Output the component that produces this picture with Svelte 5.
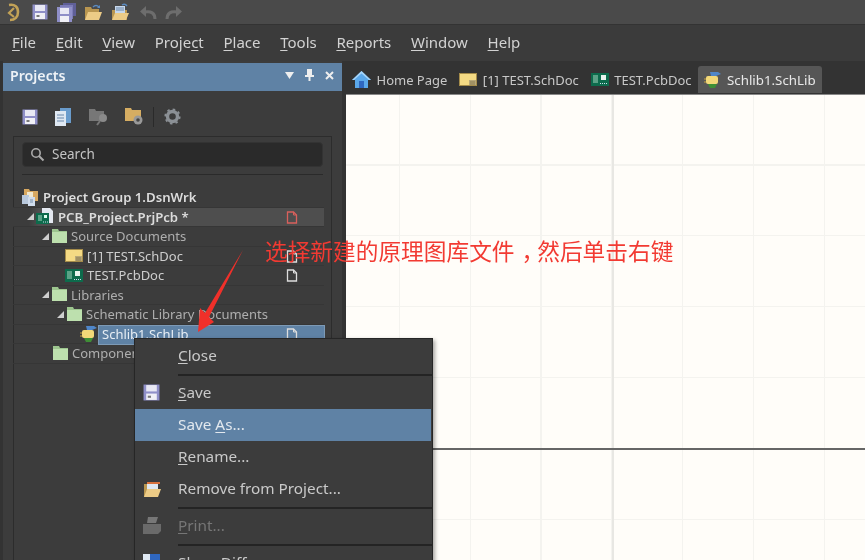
<script>
  const menus = [['F','ile'],['E','dit'],['V','iew'],['Proje','c','t'],['P','lace'],['T','ools'],['R','eports'],['W','indow'],['H','elp']];
  const rows = [
    {t:'Project Group 1.DsnWrk', left:21, icon:'group', bold:true},
    {t:'PCB_Project.PrjPcb *', left:27, tri:true, icon:'prj', bold:true, doc:'#d9605c', active:true},
    {t:'Source Documents', left:42, tri:true, icon:'folder', dim:true},
    {t:'[1] TEST.SchDoc', left:65, icon:'sch', doc:'#ddd'},
    {t:'TEST.PcbDoc', left:65, icon:'pcb', doc:'#ddd'},
    {t:'Libraries', left:42, tri:true, icon:'folder', dim:true},
    {t:'Schematic Library Documents', left:57, tri:true, icon:'folder', dim:true},
    {t:'Schlib1.SchLib', left:80, icon:'lib', doc:'#ddd', sel:true},
    {t:'Components', left:52, icon:'folder', dim:true}
  ];
  const tabs = [
    {t:'Home Page', icon:'home'},
    {t:'[1] TEST.SchDoc', icon:'sch'},
    {t:'TEST.PcbDoc', icon:'pcb'},
    {t:'Schlib1.SchLib', icon:'lib', on:true}
  ];
</script>

{#snippet save(s)}
  <svg width={s} height={s} viewBox="0 0 16 16"><rect x=".5" y=".5" width="15" height="15" fill="#8f8fc8"/><rect x="3" y="1" width="10" height="6" fill="#e8e8f4"/><rect x="3" y="9" width="10" height="6" fill="#f0f0f6"/><rect x="4.500" y="11" width="3" height="2" fill="#777"/></svg>
{/snippet}
{#snippet openFolder(arrow)}
  <svg width="19" height="19" viewBox="0 0 19 19"><path d="M1 4h6l1 2h7v11H1z" fill="#b99650"/><path d="M4 9h14l-3 8H1z" fill="#eccb86"/>{#if arrow}<path d="M9 4q3-3 6 0" fill="none" stroke="#5a8ac0" stroke-width="1.400"/><path d="M16 2v3h-3z" fill="#5a8ac0"/>{:else}<path d="M4 2h13v2H4z" fill="#d8703a"/><rect x="4" y="4" width="11" height="5" fill="#dfe8f2"/>{/if}</svg>
{/snippet}
{#snippet icon(k)}
  {#if k==='folder'}
    <svg width="17" height="15" viewBox="0 0 17 15"><path d="M1 0h6l1 2h8v12H1z" fill="#9cc58e"/><path d="M1 3h15v11H1z" fill="#bde0ae"/></svg>
  {:else if k==='sch'}
    <svg width="18" height="13" viewBox="0 0 18 13"><rect x=".5" y=".5" width="17" height="12" fill="#f4da84" stroke="#a58c4a"/><rect x="10" y="7" width="7" height="5" fill="#b8a878"/><path d="M11 9h5M11 11h5" stroke="#8a7a50"/></svg>
  {:else if k==='pcb'}
    <svg width="18" height="13" viewBox="0 0 18 13"><rect width="18" height="13" fill="#0d6b4c"/><path d="M2 3h5M2 5h5M2 7h5M2 9h5" stroke="#a8d8c0"/><rect x="10" y="2" width="5" height="5" fill="#e8f4ee"/><path d="M9 10.500h7" stroke="#cde" stroke-dasharray="1 1"/></svg>
  {:else if k==='lib'}
    <svg width="18" height="18" viewBox="0 0 18 18"><path d="M6 1h8l3 2-5 2H7z" fill="#4f86c8"/><rect x="2" y="5" width="12" height="8" rx="2" fill="#f2d878"/><path d="M4 13h9l-2 4H6z" fill="#3f8f36"/><path d="M0 8h2M0 11h2" stroke="#c9a33c"/></svg>
  {:else if k==='home'}
    <svg width="19" height="19" viewBox="0 0 19 19"><path d="M9.500 1 19 10h-3v8H3v-8H0z" fill="#5ba8ea"/><path d="M9.500 1 19 10h-2L9.500 3.500 2 10H0z" fill="#a5d4f8"/><rect x="7" y="11" width="5" height="7" fill="#2f67c0"/></svg>
  {:else if k==='prj'}
    <svg width="18" height="18" viewBox="0 0 18 18"><path d="M6 0h8l3 3v12H6z" fill="#e4e8f0"/><rect y="5" width="13" height="11" fill="#0d6b4c"/><path d="M2 8h4M2 10h4M2 12h4" stroke="#a8d8c0"/><rect x="8" y="7" width="3" height="3" fill="#dfe"/><path d="M7 14h5" stroke="#cde" stroke-dasharray="1 1"/></svg>
  {:else if k==='group'}
    <svg width="18" height="18" viewBox="0 0 18 18"><path d="M3 1h5l1 2h8v10H3z" fill="#d8a860"/><rect x="6" y="4" width="6" height="5" fill="#f0e8d0"/><rect x="1" y="7" width="7" height="9" fill="#b8c8dc"/><rect x="7" y="9" width="7" height="9" fill="#d0dcec"/><path d="M9 12h3M9 14h3" stroke="#7890a8"/></svg>
  {/if}
{/snippet}

<div class="app">
  <header class="quick">
    <svg class="logo" width="13" height="19" viewBox="0 0 13 19"><path d="M2 2c6-1 9 2 9 7s-3 8-8 8" fill="none" stroke="#c2a257" stroke-width="2.600"/><path d="M7 5 2 10l5 4" fill="none" stroke="#c2a257" stroke-width="2.200"/></svg>
    <span class="q1">{@render save(16)}</span>
    <svg class="q2" width="20" height="19" viewBox="0 0 20 19"><rect x="6" y="0" width="13" height="13" fill="#5f5f98"/><rect x="3" y="2" width="13" height="14" fill="#7c7cb8"/><rect y="4" width="15" height="15" fill="#8f8fc8"/><rect x="3" y="5" width="9" height="6" fill="#e8e8f4"/><rect x="3" y="13" width="9" height="6" fill="#f0f0f6"/></svg>
    {@render openFolder(true)}
    <svg width="19" height="19" viewBox="0 0 19 19"><path d="M1 7h15v10H1z" fill="#b99650"/><rect x="4" y="3" width="10" height="8" fill="#c8d8ec"/><path d="M5 5h8M5 7h8" stroke="#6a88aa"/><path d="M4 10h14l-3 7H1z" fill="#eccb86"/><path d="M11 2q3-2 5 1" fill="none" stroke="#5a8ac0" stroke-width="1.400"/></svg>
    <svg class="undo" width="18" height="15" viewBox="0 0 18 15"><path d="M16 14c0-6-4-8-10-7" fill="none" stroke="#6d6d6d" stroke-width="3"/><path d="M7 1 1 6.500 7 12z" fill="#6d6d6d"/></svg>
    <svg class="redo" width="18" height="15" viewBox="0 0 18 15"><path d="M2 14c0-6 4-8 10-7" fill="none" stroke="#6d6d6d" stroke-width="3"/><path d="M11 1l6 5.500L11 12z" fill="#6d6d6d"/></svg>
  </header>

  <nav class="menu">
    {#each menus as m}
      <span>
        {#if m.length === 3}{m[0]}<u>{m[1]}</u>{m[2]}{:else}<u>{m[0]}</u>{m[1]}{/if}
      </span>
    {/each}
  </nav>

  <main class="body">
    <aside class="panel">
      <div class="title">
        <b>Projects</b>
        <span class="controls">
          <svg width="9" height="7" viewBox="0 0 9 7"><path d="M0 0h9L4.500 7z" fill="#eee"/></svg>
          <svg width="9" height="12" viewBox="0 0 9 12"><path d="M2 0h5v6h2v2H5.500v4h-2V8H0V6h2z" fill="#eee"/></svg>
          <svg width="9" height="9" viewBox="0 0 9 9"><path d="M1 1l7 7M8 1 1 8" stroke="#eee" stroke-width="2"/></svg>
        </span>
      </div>
      <div class="tools">
        {@render save(16)}
        <svg width="17" height="18" viewBox="0 0 17 18"><rect x="5" width="11" height="15" fill="#6a9ccc"/><rect y="3" width="11" height="15" fill="#dfe8f2"/><path d="M2 7h7M2 10h7M2 13h7" stroke="#6a88aa"/></svg>
        <svg width="19" height="18" viewBox="0 0 19 18"><path d="M0 1h6l1 2h8v10H0z" fill="#777"/><circle cx="14" cy="10" r="4" fill="#8a8a8a"/><path d="M11 13l-3 4" stroke="#777" stroke-width="2"/></svg>
        <svg width="19" height="19" viewBox="0 0 19 19"><path d="M0 1h6l1 2h9v11H0z" fill="#d6ad62"/><circle cx="13" cy="13" r="4.500" fill="#999"/><circle cx="13" cy="13" r="1.800" fill="#444"/></svg>
        <i class="vsep"></i>
        <svg class="gear" width="17" height="17" viewBox="0 0 17 17"><circle cx="8.500" cy="8.500" r="5" fill="none" stroke="#8b9095" stroke-width="3.400"/><circle cx="8.500" cy="8.500" r="7.200" fill="none" stroke="#8b9095" stroke-width="1.800" stroke-dasharray="2.500 3.150"/></svg>
      </div>
      <div class="inner">
        <div class="search">
          <svg width="15" height="15" viewBox="0 0 15 15"><circle cx="6" cy="6" r="4.200" fill="none" stroke="#aaa" stroke-width="1.600"/><path d="M9 9l4.500 4.500" stroke="#aaa" stroke-width="2"/></svg>
          <span>Search</span>
        </div>
        <div class="rule"></div>
        <ul class="tree">
          {#each rows as r}
            <li class:active={r.active} class:bold={r.bold} class:dim={r.dim} style="padding-left:{r.left - 13}px">
              {#if r.tri}<i class="tri"></i>{/if}
              <span class="ico" class:fold={r.icon === 'folder'}>{@render icon(r.icon)}</span>
              <span class="label" class:sel={r.sel}>{r.t}</span>
              {#if r.doc}
                <svg class="doc" width="12" height="13" viewBox="0 0 12 13"><path d="M1.500 1h6l3 3v8h-9z" fill="none" stroke={r.doc} stroke-width="1.300"/><path d="M7.500 1v3h3" fill="none" stroke={r.doc}/></svg>
              {/if}
            </li>
          {/each}
        </ul>
      </div>
    </aside>

    <section class="work">
      <div class="tabs">
        {#each tabs as t}
          <div class="tab" class:on={t.on}>{@render icon(t.icon)}<span>{t.t}</span></div>
        {/each}
      </div>
      <div class="canvas"></div>
    </section>
  </main>

  <div class="ctx">
    <div class="it"><span><u>C</u>lose</span></div>
    <div class="sp"></div>
    <div class="it"><em>{@render save(17)}</em><span><u>S</u>ave</span></div>
    <div class="it hot"><span>Save <u>A</u>s...</span></div>
    <div class="it"><span><u>R</u>ename...</span></div>
    <div class="it"><em>{@render openFolder(false)}</em><span>Remove from Project...</span></div>
    <div class="sp"></div>
    <div class="it off"><em><svg width="18" height="17" viewBox="0 0 18 17"><path d="M5 0h10l-2 6H4z" fill="#777"/><path d="M0 7h18v7l-3 3H0z" fill="#6a6a6a"/></svg></em><span><u>P</u>rint...</span></div>
    <div class="sp"></div>
    <div class="it"><em><svg width="17" height="17" viewBox="0 0 17 17"><rect width="12" height="14" fill="#dfe8f2"/><rect x="7" width="10" height="8" fill="#2f67c0"/></svg></em><span>Show Diff</span></div>
  </div>

  <div class="note">选择新建的原理图库文件<span class="comma">，</span>然后单击右键</div>
  <svg class="arrow" width="60" height="90" viewBox="190 248 60 90"><path d="M243 250 209 317 214 322 198 332 200 308 205 313z" fill="#f0302a"/></svg>
</div>

<style>
  :global(body) { margin: 0; background: #333; }
  .app {
    position: relative; width: 865px; height: 560px; overflow: hidden;
    display: flex; flex-direction: column; background: #333;
    font-family: "Noto Sans", "Liberation Sans", sans-serif; font-size: 14px; color: #cfcfcf;
    filter: blur(.45px);
  }
  u { text-underline-offset: 2px; text-decoration-thickness: 1px; }
  .quick {
    height: 24px; flex: none; display: flex; align-items: center; gap: 8px;
    padding-left: 7px; background: #4a4a4a; border-bottom: 1px solid #333;
  }
  .q1 { display: flex; margin-left: 4px; }
  .q2 { margin-right: -1px; margin-left: 1px; }
  .undo { margin-left: 1px; }
  .redo { margin-left: 0; }
  .menu {
    height: 36px; flex: none; display: flex; align-items: center; gap: 19.700px; padding: 0 0 2px 12px;
    box-sizing: border-box; background: #3b3b3b; font-size: 15px; color: #d2d2d2;
  }
  .body { flex: 1; display: flex; min-height: 0; }
  .panel {
    width: 339px; margin-left: 3px; flex: none; padding-top: 2px; background: #3c3c3c;
    display: flex; flex-direction: column;
  }
  .title {
    height: 28px; flex: none; display: flex; align-items: center; justify-content: space-between; box-sizing: border-box;
    padding: 0 8px 4px 7px; background: #5f82a5; color: #eef2f6; font-size: 14.200px;
  }
  .title b { font-weight: 600; }
  .controls { display: flex; align-items: center; gap: 11px; }
  .tools { height: 45px; flex: none; display: flex; align-items: center; gap: 17px; padding-left: 19px; box-sizing: border-box; padding-top: 6px; }
  .vsep { width: 1px; height: 20px; background: #2a2a2a; margin: 0 -7px 0 -8px; }
  .inner {
    flex: 1; margin: 0 10px; padding: 5px 8px 0; border: 1px solid #2c2c2c; border-bottom: 0;
  }
  .search {
    height: 25px; display: flex; align-items: center; gap: 7px; padding: 0 0 1px 7px;
    background: #2a2a2a; border-radius: 4px; border: 1px solid #333; box-sizing: border-box; font-size: 13.500px; color: #c4c4c4;
  }
  .rule { height: 1px; margin-top: 7px; background: #2a2a2a; }
  .tree { list-style: none; margin: 13px 0 0 -9px; padding: 0; width: 311px; }
  .tree li {
    height: 19.500px; display: flex; align-items: center; position: relative; font-size: 13px;
    border-bottom: 1px solid #363636; box-sizing: border-box; color: #cdcdcd;
  }
  .tree li.bold { font-weight: 600; color: #dcdcdc; font-size: 13.200px; }
  .tree li.dim { color: #aeaeae; }
  .tree li.active { background: linear-gradient(90deg, #3c3c3c 16px, #4e4e4e 26px); }
  .tri { flex: none; width: 0; height: 0; margin-right: 2px; border-left: 7px solid transparent; border-bottom: 7px solid #cfcfcf; }
  .ico { display: inline-flex; flex: none; width: 22px; }
  .ico.fold { width: 20px; }
  .label { white-space: nowrap; }
  .label.sel {
    position: absolute; left: 86px; right: 0; top: 1px; height: 18px; line-height: 17px; padding-left: 3px;
    background: #5f82a5; outline: 1px solid #7d9ab6; color: #e6edf4;
  }
  .doc { position: absolute; left: 273px; top: 3px; }
  .work { flex: 1; min-width: 0; display: flex; flex-direction: column; }
  .tabs {
    height: 33px; flex: none; display: flex; align-items: flex-end; gap: 1px; padding: 0 0 1px 4.500px; background: #333;
    box-sizing: border-box; font-size: 13px; color: #c8c8c8;
  }
  .tab { height: 27px; display: flex; align-items: center; gap: 5.500px; padding: 0 5.500px; white-space: nowrap; }
  .tab.on { background: #565656; border-radius: 3px 3px 0 0; color: #e8e8e8; padding-right: 6px; font-size: 13.300px; }
  .canvas {
    flex: 1; margin-left: 4px; border-top: 1px solid #888;
    background-color: #fffdf9;
    background-image:
      linear-gradient(#666 0 0),
      linear-gradient(#e8e7e3 0 0),
      repeating-linear-gradient(90deg, transparent 0 52.800px, #f4f3ef 52.800px 54px, transparent 54px 70.800px),
      repeating-linear-gradient(180deg, transparent 0 69.300px, #f4f3ef 69.300px 70.500px, transparent 70.500px 70.900px);
    background-size: 100% 2px, 2px 100%, auto, auto;
    background-position: 0 353px, 265.500px 0, 0 0, 0 0;
    background-repeat: no-repeat;
  }
  .ctx {
    position: absolute; left: 134px; top: 338px; width: 297px; height: 240px; padding-top: 1px;
    background: #3c3c3c; border: 1px solid #262626; box-shadow: 2px 2px 4px rgba(0,0,0,.35); font-size: 15.300px; color: #c9c9c9;
  }
  .it { height: 32px; box-sizing: border-box; padding: 0 0 2px 43px; display: flex; align-items: center; position: relative; }
  .it em { position: absolute; left: 8px; top: 7px; display: flex; }
  .hot { background: #5f82a5; color: #e2e8ee; margin-right: 1px; }
  .off { color: #767676; }
  .sp { height: 5px; margin-left: 43px; position: relative; }
  .sp::after { content: ""; position: absolute; left: 0; right: 0; top: 2px; height: 1.500px; background: #242424; }
  .note {
    position: absolute; left: 265px; top: 235px; font: 22.700px/32px "Noto Sans CJK SC", sans-serif; color: #f23a32; white-space: nowrap;
  }
  .comma { font-feature-settings: "halt"; padding: 0 4.300px 0 7px; }
  .arrow { position: absolute; left: 190px; top: 248px; }
</style>
